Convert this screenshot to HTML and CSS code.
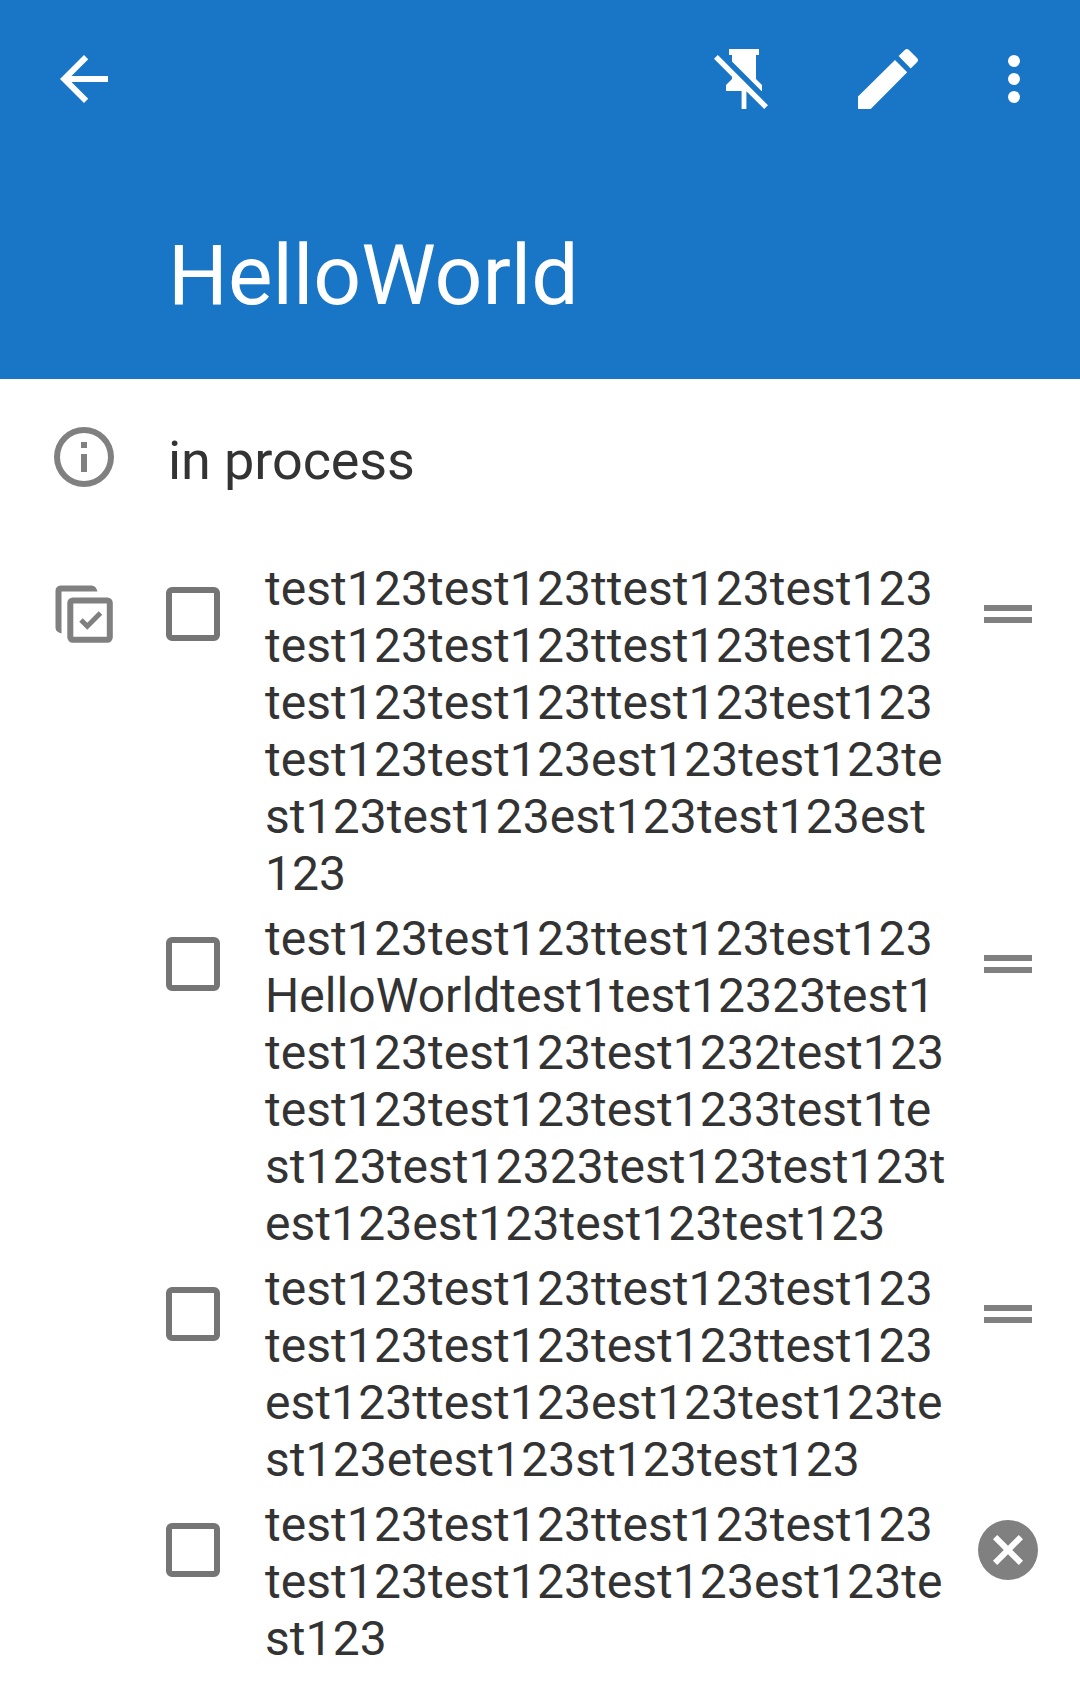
FILE: index.html
```html
<!DOCTYPE html>
<html lang="en">
<head>
<meta charset="utf-8">
<title>HelloWorld</title>
<link rel="stylesheet" href="styles.css">
</head>
<body>
<header class="appbar">
  <div class="toolbar">
    <svg class="icon back" viewBox="0 0 24 24"><path d="M20 11H7.830l5.590-5.590L12 4l-8 8 8 8 1.410-1.410L7.830 13H20z"/></svg>
    <svg class="icon pin" viewBox="0 0 24 24"><path d="M2 5.270L3.280 4 20 20.720 18.730 22l-5.930-5.930V22h-1.600v-6H6v-2l2-2v-.730l-6-6M16 12l2 2v2h-.180L8 6.180V4H7V2h10v2h-1v8z"/></svg>
    <svg class="icon edit" viewBox="0 0 72 72"><path d="M6 53.500V66h12.700L55.200 29.300 43 17zM58.700 25.500l6.300-6.300q2-2 0-4.200L57 7q-2.100-2-4.200 0l-6.200 6z"/></svg>
    <svg class="icon more" viewBox="0 0 24 24"><path d="M12 8a2 2 0 1 0 0-4 2 2 0 0 0 0 4zm0 2a2 2 0 1 0 0 4 2 2 0 0 0 0-4zm0 6a2 2 0 1 0 0 4 2 2 0 0 0 0-4z"/></svg>
  </div>
  <h1 class="title">HelloWorld</h1>
</header>
<main>
  <section class="status">
    <svg class="icon" viewBox="0 0 24 24"><path d="M11 7h2v2h-2zm0 4h2v6h-2zm1-9a10 10 0 1 0 0 20 10 10 0 0 0 0-20zm0 18a8 8 0 1 1 0-16 8 8 0 0 1 0 16z"/></svg>
    <p class="status-text">in process</p>
  </section>
  <section class="checklist">
    <svg class="icon list-icon" viewBox="0 0 72 72"><path d="M7.500 48.500V12q0-5.500 6-5.500H43.500q4.500 0 6 6h-36v42q-6-1.500-6-6z"/><g fill="none" stroke="#808080"><rect x="22.300" y="21.500" width="39.500" height="39.300" rx="2.500" stroke-width="6"/><path d="M33 41l6.300 6.300L52.500 34" stroke-width="5"/></g></svg>
    <ul class="items">
      <li class="item"><span class="box"></span><p class="text">test123test123ttest123test123<br>test123test123ttest123test123<br>test123test123ttest123test123<br>test123test123est123test123te<br>st123test123est123test123est<br>123</p><span class="handle"></span></li>
      <li class="item"><span class="box"></span><p class="text">test123test123ttest123test123<br>HelloWorldtest1test12323test1<br>test123test123test1232test123<br>test123test123test1233test1te<br>st123test12323test123test123t<br>est123est123test123test123</p><span class="handle"></span></li>
      <li class="item"><span class="box"></span><p class="text">test123test123ttest123test123<br>test123test123test123ttest123<br>est123ttest123est123test123te<br>st123etest123st123test123</p><span class="handle"></span></li>
      <li class="item"><span class="box"></span><p class="text">test123test123ttest123test123<br>test123test123test123est123te<br>st123</p><svg class="icon clear" viewBox="0 0 24 24"><path d="M12 2a10 10 0 1 0 0 20 10 10 0 0 0 0-20zm5 13.590L15.590 17 12 13.410 8.410 17 7 15.590 10.590 12 7 8.410 8.410 7 12 10.590 15.590 7 17 8.410 13.410 12z"/></svg></li>
    </ul>
  </section>
</main>
</body>
</html>
```
FILE: styles.css
```css
* { box-sizing: border-box; }
body { margin: 0; background: #fff; color: #333; font-family: Roboto, "Noto Sans", sans-serif; }
.icon { display: block; flex: none; width: 72px; height: 72px; fill: #808080; }
.appbar { height: 379px; background: #1976c6; color: #fff; }
.toolbar { display: flex; height: 158px; padding: 43px 30px 0 48px; }
.toolbar .icon { fill: #fff; }
.pin { margin-left: 588px; }
.edit { margin-left: 72px; }
.more { margin-left: 54px; }
.title { margin: 69px 0 0 168px; font-size: 84px; line-height: 98px; font-weight: 400; }
.status { display: flex; height: 188px; padding: 42px 0 0 48px; }
.status-text { margin: 8px 0 0 48px; font-size: 54px; line-height: 64px; letter-spacing: -0.1px; }
.checklist { display: flex; padding-left: 48px; }
.list-icon { margin-top: 12px; }
.items { flex: 1; margin: -7px 0 0; padding: 0 0 0 46px; list-style: none; }
.item { display: flex; align-items: flex-start; padding-bottom: 8px; }
.box { width: 54px; height: 54px; margin-top: 27px; border: 6px solid #757575; border-radius: 6px; }
.text { width: 719px; margin: 0 0 0 45px; font-size: 48px; line-height: 57px; letter-spacing: 0.06px; white-space: nowrap; }
.handle { width: 48px; height: 18px; margin-top: 45px; border: solid #808080; border-width: 6px 0; }
.clear { margin: 18px 0 0 -12px; }
```
